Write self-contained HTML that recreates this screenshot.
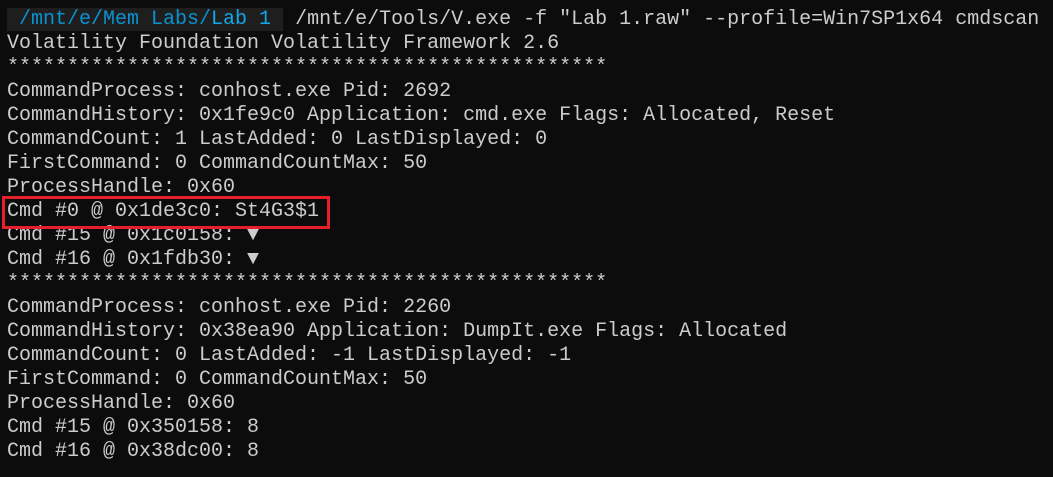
<!DOCTYPE html>
<html><head><meta charset="utf-8"><style>
html,body{margin:0;padding:0;background:#0c0c0c;width:1053px;height:477px;overflow:hidden}
pre{margin:0;position:absolute;left:7px;top:8px;font-family:"Liberation Mono",monospace;font-size:20px;line-height:24px;color:#cccccc;white-space:pre}
.p{background:#1e1e1e;color:#0099dd}
.b{color:#11a8e8}
.box{position:absolute;left:2px;top:196px;width:322px;height:27px;border:3px solid #e5202a}
</style></head><body>
<pre><span class="p"> <span style="color:#0a92d0">/mnt/e/Mem Labs/</span><span class="b">Lab 1</span> </span> /mnt/e/Tools/V.exe -f "Lab 1.raw" --profile=Win7SP1x64 cmdscan
Volatility Foundation Volatility Framework 2.6
**************************************************
CommandProcess: conhost.exe Pid: 2692
CommandHistory: 0x1fe9c0 Application: cmd.exe Flags: Allocated, Reset
CommandCount: 1 LastAdded: 0 LastDisplayed: 0
FirstCommand: 0 CommandCountMax: 50
ProcessHandle: 0x60
Cmd #0 @ 0x1de3c0: St4G3$1
Cmd #15 @ 0x1c0158: ▼
Cmd #16 @ 0x1fdb30: ▼
**************************************************
CommandProcess: conhost.exe Pid: 2260
CommandHistory: 0x38ea90 Application: DumpIt.exe Flags: Allocated
CommandCount: 0 LastAdded: -1 LastDisplayed: -1
FirstCommand: 0 CommandCountMax: 50
ProcessHandle: 0x60
Cmd #15 @ 0x350158: 8
Cmd #16 @ 0x38dc00: 8</pre>
<div class="box"></div>
</body></html>
